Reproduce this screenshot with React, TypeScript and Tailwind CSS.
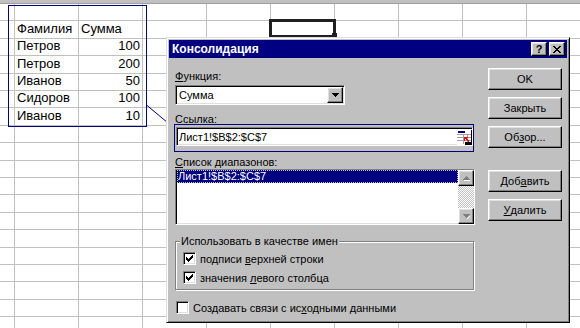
import React from "react";

const rowHeights = [17, 18, 17, 18, 17, 17, 18, 17, 18, 17, 17, 18, 17, 18, 17, 17, 18, 17, 18];

const data: Record<number, [string, string]> = {
  1: ["Фамилия", "Сумма"],
  2: ["Петров", "100"],
  3: ["Петров", "200"],
  4: ["Иванов", "50"],
  5: ["Сидоров", "100"],
  6: ["Иванов", "10"],
};

const raised =
  "border border-t-white border-l-white border-r-black border-b-black shadow-[inset_-1px_-1px_#808080,inset_1px_1px_#dfdfdf]";
const sunken =
  "border border-t-[#808080] border-l-[#808080] border-r-white border-b-white shadow-[inset_1px_1px_#000,inset_-1px_-1px_#dfdfdf]";

function Sheet() {
  return (
    <div className="flex flex-col">
      <div className="h-[4px] bg-[#c0c0c0] border-b border-[#a0a0a0]" />
      {rowHeights.map((h, r) => (
        <div key={r} className="flex" style={{ height: h }}>
          <div className="w-[15px] shrink-0 border-r border-b border-[#c0c0c0]" />
          {Array.from({ length: 9 }).map((_, c) => {
            const isNumber = c === 1 && r > 1;
            return (
              <div
                key={c}
                className={
                  "w-[64px] shrink-0 border-r border-b border-[#c0c0c0] flex items-end pb-[2px] text-[13px] leading-[15px] text-black " +
                  (isNumber ? "justify-end pr-[2px]" : "pl-[2px]")
                }
              >
                {data[r] && c < 2 ? data[r][c] : ""}
              </div>
            );
          })}
        </div>
      ))}
    </div>
  );
}

function Btn({ children, className = "" }: { children: React.ReactNode; className?: string }) {
  return (
    <div className={`${raised} w-[74px] h-[22px] flex items-center justify-center text-[11px] text-black ${className}`}>
      {children}
    </div>
  );
}

function Check({ checked }: { checked: boolean }) {
  return (
    <div className={`${sunken} w-[13px] h-[13px] bg-white shrink-0 flex items-center justify-center`}>
      {checked && (
        <svg width="7" height="7" viewBox="0 0 7 7" shapeRendering="crispEdges">
          <path d="M6 0h1v3h-1v1h-1v1h-1v1h-1v1h-1v-1h-1v-1h-1v-3h1v1h1v1h1v-1h1v-1h1v-1h1z" fill="#000" />
        </svg>
      )}
    </div>
  );
}

function RefIcon() {
  return (
    <svg width="15" height="15" viewBox="0 0 15 15" shapeRendering="crispEdges">
      <rect x="0" y="0" width="15" height="15" fill="#fff" />
      <path d="M0 4.5h14M0 7.5h14M0 10.5h14M6.5 4v10M10.5 4v10" stroke="#a0a0a0" strokeWidth="1" />
      <rect x="1" y="1" width="7" height="2" fill="#000080" />
      <rect x="14" y="0" width="1" height="15" fill="#000" />
      <rect x="8" y="12" width="7" height="3" fill="#000" />
      <path d="M7 7h4v1h-2l3 3-1 1-3-3v2h-1z" fill="#ff0000" />
    </svg>
  );
}

function ScrollArrow({ up }: { up: boolean }) {
  return (
    <div className={`${raised} w-[16px] h-[16px] bg-[#c0c0c0] flex items-center justify-center`}>
      <svg width="7" height="5" viewBox="0 0 7 5" shapeRendering="crispEdges">
        {up ? (
          <>
            <path d="M1 4h7v1H1z" fill="#fff" />
            <path d="M3 0h1v1h1v1h1v1h1v1H0V3h1V2h1V1h1z" fill="#808080" />
          </>
        ) : (
          <>
            <path d="M0 0h7v1H6v1H5v1H4v1H3V3H2V2H1V1H0z" fill="#808080" />
            <path d="M4 4h1v1H4zM5 3h1v1H5zM6 2h1v1H6z" fill="#fff" />
          </>
        )}
      </svg>
    </div>
  );
}

function Dialog() {
  return (
    <div className="absolute left-[166px] top-[37px] w-[404px] h-[286px] bg-[#c0c0c0] border border-t-[#dfdfdf] border-l-[#dfdfdf] border-r-black border-b-black shadow-[inset_1px_1px_#fff,inset_-1px_-1px_#808080] p-[2px] text-black">
      <div className="h-[18px] bg-[#000080] flex items-center justify-between pl-[3px] pr-[2px]">
        <span className="text-white font-bold text-[12px] leading-[14px]">Консолидация</span>
        <div className="flex gap-[1px]">
          <div className={`${raised} w-[16px] h-[14px] bg-[#c0c0c0] flex items-center justify-center font-bold text-[11px] leading-none`}>?</div>
          <div className={`${raised} w-[16px] h-[14px] bg-[#c0c0c0] flex items-center justify-center ml-[1px]`}>
            <svg width="8" height="7" viewBox="0 0 8 7" shapeRendering="crispEdges">
              <path d="M0 0h2v1h1v1h2V1h1V0h2v1H7v1H6v1H5v1h1v1h1v1h1v1H6V6H5V5H3v1H2v1H0V6h1V5h1V4h1V3H2V2H1V1H0z" fill="#000" />
            </svg>
          </div>
        </div>
      </div>

      <div className="flex pl-[6px]">
        <div className="w-[300px] pt-[11px] text-[11px]">
          <div className="h-[14px] leading-[14px]">
            <u>Ф</u>ункция:
          </div>
          <div className={`${sunken} mt-[2px] w-[170px] h-[20px] bg-white flex items-center justify-between p-[1px]`}>
            <span className="pl-[2px] leading-[14px]">Сумма</span>
            <div className={`${raised} w-[16px] h-[16px] bg-[#c0c0c0] flex items-center justify-center`}>
              <svg width="7" height="4" viewBox="0 0 7 4" shapeRendering="crispEdges">
                <path d="M0 0h7v1H6v1H5v1H4v1H3V3H2V2H1V1H0z" fill="#000" />
              </svg>
            </div>
          </div>
          <div className="mt-[7px] h-[14px] leading-[14px]">Ссылка:</div>
          <div className="relative mt-[1px] ml-[1px]">
            <div className={`${sunken} w-[297px] h-[19px] bg-white flex items-center justify-between pl-[2px] pr-0`}>
              <span className="leading-[14px]">Лист1!$B$2:$C$7</span>
              <div className="self-end">
                <RefIcon />
              </div>
            </div>
            <div className="absolute left-[-2px] top-[-3px] w-[300px] h-[28px] border border-[#000080]" />
          </div>
          <div className="mt-[9px] h-[14px] leading-[14px]">
            <u>С</u>писок диапазонов:
          </div>
          <div className={`${sunken} w-[300px] h-[56px] bg-white flex`}>
            <div className="flex-1 pl-[1px]">
              <div className="h-[13px] bg-[#000080] text-white leading-[13px] pl-[1px] outline outline-1 outline-dotted outline-[#c0c0c0] outline-offset-[-1px]">
                Лист1!$B$2:$C$7
              </div>
            </div>
            <div className="w-[16px] flex flex-col">
              <ScrollArrow up />
              <div className="flex-1 bg-[repeating-conic-gradient(#c0c0c0_0_25%,#fff_0_50%)] bg-[length:2px_2px]" />
              <ScrollArrow up={false} />
            </div>
          </div>
          <div className="relative mt-[16px] w-[299px] h-[49px] border border-[#808080] shadow-[1px_1px_0_#fff,inset_1px_1px_0_#fff] pl-[7px] pt-[10px]">
            <span className="absolute left-[4px] top-[-8px] bg-[#c0c0c0] px-[1px] leading-[14px]">Использовать в качестве имен</span>
            <div className="flex items-center gap-[4px] h-[13px]">
              <Check checked />
              <span className="leading-[14px]">
                подписи <u>в</u>ерхней строки
              </span>
            </div>
            <div className="flex items-center gap-[4px] h-[13px] mt-[6px]">
              <Check checked />
              <span className="leading-[14px]">
                значения <u>л</u>евого столбца
              </span>
            </div>
          </div>
          <div className="flex items-center gap-[4px] h-[13px] mt-[11px] ml-[1px]">
            <Check checked={false} />
            <span className="leading-[14px]">
              Создавать связи с ис<u>х</u>одными данными
            </span>
          </div>
        </div>

        <div className="ml-[13px] pt-[10px] flex flex-col gap-[7px]">
          <Btn>OK</Btn>
          <Btn>Закрыть</Btn>
          <Btn>
            Об<u>з</u>ор...
          </Btn>
          <Btn className="mt-[15px]">
            Доб<u>а</u>вить
          </Btn>
          <Btn>
            <u>У</u>далить
          </Btn>
        </div>
      </div>
    </div>
  );
}

export default function App() {
  return (
    <div className="relative w-[580px] h-[328px] overflow-hidden bg-white font-['Liberation_Sans',Arial,sans-serif]">
      <Sheet />
      {/* consolidation range */}
      <div className="absolute left-[8px] top-[5px] w-[139px] h-[122px] border border-[#000080]" />
      {/* active cell */}
      <div className="absolute left-[269px] top-[19px] w-[67px] h-[19px] border-[3px] border-[#202020]" />
      <div className="absolute left-[332px] top-[33px] w-[5px] h-[5px] bg-[#202020]" />
      <svg className="absolute left-0 top-0" width="580" height="328">
        <line x1="146.5" y1="105" x2="174" y2="128" stroke="#000080" strokeWidth="1" />
      </svg>
      <Dialog />
    </div>
  );
}
